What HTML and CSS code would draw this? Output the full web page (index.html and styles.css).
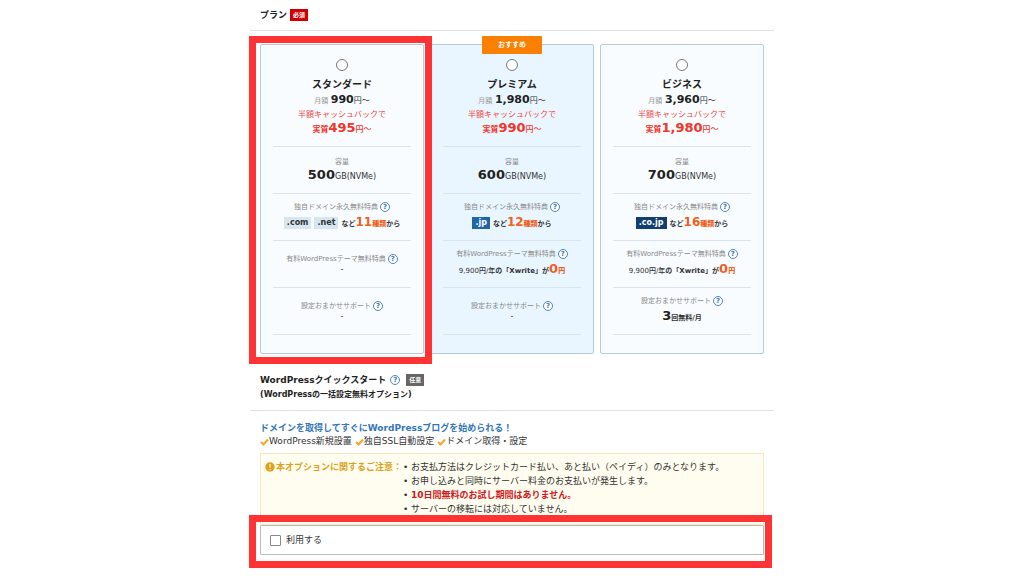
FILE: index.html
```html
<!DOCTYPE html>
<html lang="ja">
<head>
<meta charset="utf-8">
<meta name="viewport" content="width=device-width, initial-scale=1">
<title>プラン</title>
<link rel="stylesheet" href="styles.css">
</head>
<body>
<main class="page">
  <section>
    <header class="section-head">
      <h2 class="title">プラン</h2><span class="badge badge-required">必須</span>
    </header>
    <div class="plans">
      <div class="plan highlighted">
        <div class="card">
          <div class="intro">
            <input class="radio" type="radio" name="plan" id="standard">
            <label class="name" for="standard">スタンダード</label>
            <p class="price"><span class="muted">月額</span> <b>990</b>円〜</p>
            <p class="cashback">半額キャッシュバックで</p>
            <p class="actual"><strong>実質</strong><b>495</b>円〜</p>
          </div>
          <div class="row"><p class="label">容量</p><p class="value"><b>500</b>GB(NVMe)</p></div>
          <div class="row"><p class="label">独自ドメイン永久無料特典<button class="help" type="button">?</button></p><p class="offer"><span class="tag">.com</span><span class="tag">.net</span><span>など<b class="big">11</b><b class="orange">種類</b>から</span></p></div>
          <div class="row"><p class="label">有料WordPressテーマ無料特典<button class="help" type="button">?</button></p><p class="none">-</p></div>
          <div class="row"><p class="label">設定おまかせサポート<button class="help" type="button">?</button></p><p class="none">-</p></div>
        </div>
      </div>
      <div class="plan">
        <span class="ribbon">おすすめ</span>
        <div class="card premium">
          <div class="intro">
            <input class="radio" type="radio" name="plan" id="premium">
            <label class="name" for="premium">プレミアム</label>
            <p class="price"><span class="muted">月額</span> <b>1,980</b>円〜</p>
            <p class="cashback">半額キャッシュバックで</p>
            <p class="actual"><strong>実質</strong><b>990</b>円〜</p>
          </div>
          <div class="row"><p class="label">容量</p><p class="value"><b>600</b>GB(NVMe)</p></div>
          <div class="row"><p class="label">独自ドメイン永久無料特典<button class="help" type="button">?</button></p><p class="offer"><span class="tag tag-jp">.jp</span><span>など<b class="big">12</b><b class="orange">種類</b>から</span></p></div>
          <div class="row"><p class="label">有料WordPressテーマ無料特典<button class="help" type="button">?</button></p><p class="theme"><span class="medium">9,900円/年</span>の「Xwrite」が<b class="zero">0</b><b class="orange">円</b></p></div>
          <div class="row"><p class="label">設定おまかせサポート<button class="help" type="button">?</button></p><p class="none">-</p></div>
        </div>
      </div>
      <div class="plan">
        <div class="card">
          <div class="intro">
            <input class="radio" type="radio" name="plan" id="business">
            <label class="name" for="business">ビジネス</label>
            <p class="price"><span class="muted">月額</span> <b>3,960</b>円〜</p>
            <p class="cashback">半額キャッシュバックで</p>
            <p class="actual"><strong>実質</strong><b>1,980</b>円〜</p>
          </div>
          <div class="row"><p class="label">容量</p><p class="value"><b>700</b>GB(NVMe)</p></div>
          <div class="row"><p class="label">独自ドメイン永久無料特典<button class="help" type="button">?</button></p><p class="offer"><span class="tag tag-cojp">.co.jp</span><span>など<b class="big">16</b><b class="orange">種類</b>から</span></p></div>
          <div class="row"><p class="label">有料WordPressテーマ無料特典<button class="help" type="button">?</button></p><p class="theme"><span class="medium">9,900円/年</span>の「Xwrite」が<b class="zero">0</b><b class="orange">円</b></p></div>
          <div class="row"><p class="label">設定おまかせサポート<button class="help" type="button">?</button></p><p class="support"><b>3</b>回無料/月</p></div>
        </div>
      </div>
    </div>
  </section>

  <section>
    <header class="section-head quick-head">
      <div class="title-line"><h2 class="title">WordPressクイックスタート</h2><button class="help" type="button">?</button><span class="badge badge-optional">任意</span></div>
      <p class="subtitle">(WordPressの一括設定無料オプション)</p>
    </header>
    <div class="quick">
      <p class="lead">ドメインを取得してすぐにWordPressブログを始められる！</p>
      <ul class="features">
        <li><svg class="check" viewBox="0 0 9 8"><path d="M1 4l2.5 2.5L8 1.5"/></svg>WordPress新規設置</li>
        <li><svg class="check" viewBox="0 0 9 8"><path d="M1 4l2.5 2.5L8 1.5"/></svg>独自SSL自動設定</li>
        <li><svg class="check" viewBox="0 0 9 8"><path d="M1 4l2.5 2.5L8 1.5"/></svg>ドメイン取得・設定</li>
      </ul>
      <div class="notice">
        <p class="notice-title"><svg class="alert" viewBox="0 0 10 10"><circle cx="5" cy="5" r="4.7"/><path d="M5 2v3.6M5 7v1.2"/></svg>本オプションに関するご注意：</p>
        <ul class="notice-list">
          <li>お支払方法はクレジットカード払い、あと払い（ペイディ）のみとなります。</li>
          <li>お申し込みと同時にサーバー料金のお支払いが発生します。</li>
          <li class="danger">10日間無料のお試し期間はありません。</li>
          <li>サーバーの移転には対応していません。</li>
        </ul>
      </div>
      <div class="use highlighted">
        <label class="use-box"><input class="checkbox" type="checkbox">利用する</label>
      </div>
    </div>
  </section>
</main>
</body>
</html>
```

FILE: styles.css
```css
* { box-sizing: border-box; }
body {
  margin: 0;
  background: #fff;
  color: #333;
  font-family: "DejaVu Sans", "Noto Sans CJK JP", sans-serif;
  font-size: 9px;
  line-height: 14px;
}
h2, p, ul { margin: 0; padding: 0; }
ul { list-style: none; }
button, input { margin: 0; padding: 0; font-family: inherit; }

.page { max-width: 524px; margin: 0 auto; padding-bottom: 20px; }
.section-head {
  display: flex;
  align-items: center;
  gap: 3px;
  padding: 8px 10px;
  border-bottom: 1px solid #e2e2e2;
}
.title { font-size: 9px; line-height: 14px; color: #222; }
.badge {
  padding: 0 3px;
  font-size: 6px;
  line-height: 12px;
  font-weight: bold;
  color: #fff;
}
.badge-required { background: #d00000; }
.badge-optional { background: #666; }

.plans {
  display: grid;
  grid-template-columns: repeat(3, 1fr);
  gap: 6px;
  padding: 13px 10px 0;
}
.plan { position: relative; }
.card {
  height: 100%;
  padding: 14px 12px 18px;
  background: #f8fcff;
  border: 1px solid #b8cad6;
  border-radius: 2px;
  text-align: center;
}
.premium { background: #eaf6ff; }
.ribbon {
  position: absolute;
  top: -8px;
  left: 50%;
  width: 60px;
  margin-left: -30px;
  background: #f98000;
  border-radius: 1px;
  color: #fff;
  font-size: 7px;
  font-weight: bold;
  line-height: 18px;
  text-align: center;
}
.highlighted { position: relative; }
.highlighted::after {
  content: "";
  position: absolute;
  z-index: 2;
  inset: -8px -8px -10px -11px;
  border: 7px solid #ff3333;
  pointer-events: none;
}

.intro {
  display: flex;
  flex-direction: column;
  align-items: center;
  padding-bottom: 9px;
  border-bottom: 1px solid #dbe4ea;
}
.radio {
  appearance: none;
  width: 12px;
  height: 12px;
  border: 1px solid #777;
  border-radius: 50%;
  background: #fff;
}
.name { padding-top: 7px; font-size: 10px; line-height: 14px; font-weight: bold; color: #222; }
.price { font-size: 8px; line-height: 16px; }
.price b { font-size: 11px; color: #222; }
.muted { font-size: 7px; color: #999; }
.cashback { font-size: 8px; line-height: 12px; color: #f0453a; }
.actual { font-size: 8px; line-height: 14px; color: #f0352a; font-weight: 500; }
.actual b { font-size: 13px; }

.row {
  display: flex;
  flex-direction: column;
  align-items: center;
  justify-content: center;
  height: 47px;
  border-bottom: 1px solid #dbe4ea;
  white-space: nowrap;
}
.label {
  display: flex;
  align-items: center;
  gap: 2px;
  font-size: 7px;
  line-height: 12px;
  color: #888;
}
.help {
  width: 10px;
  height: 10px;
  border: 1px solid #4f86b8;
  border-radius: 50%;
  background: #fff;
  color: #3b78b0;
  font-size: 7px;
  font-weight: bold;
  line-height: 8px;
  text-align: center;
}
.value { font-size: 8px; line-height: 14px; }
.value b, .support b { font-size: 13px; color: #222; }
.offer {
  display: flex;
  align-items: center;
  gap: 3px;
  font-size: 7px;
  line-height: 18px;
  font-weight: bold;
}
.tag { padding: 0 3px; background: #d7e6f1; font-size: 8px; line-height: 12px; }
.tag-jp { background: #1f66a6; color: #fff; }
.tag-cojp { background: #123f70; color: #fff; }
.orange, .big, .zero { color: #f0601c; }
.big { font-size: 12px; }
.zero { font-size: 13px; }
.none { font-size: 8px; line-height: 10px; }
.theme, .support { font-size: 7px; line-height: 18px; font-weight: bold; }
.medium { font-weight: 500; }

.quick-head { display: block; padding: 19px 10px 8px; }
.title-line { display: flex; align-items: center; gap: 4px; }
.title-line .badge { margin-left: 2px; }
.subtitle { margin-top: 1px; font-size: 8px; line-height: 14px; font-weight: bold; color: #222; }
.quick { padding: 10px 10px 0; }
.lead { font-weight: bold; color: #3476b8; }
.features { display: flex; flex-wrap: wrap; column-gap: 3px; line-height: 13px; }
.features li { display: flex; align-items: center; }
.check { width: 9px; height: 8px; fill: none; stroke: #f5a623; stroke-width: 2; }
.notice {
  display: flex;
  gap: 9px;
  margin-top: 5px;
  padding: 6px 4px 8px;
  background: #fffdf0;
  border: 1px solid #f3e8c0;
}
.notice-title { display: flex; align-items: center; align-self: flex-start; gap: 1px; flex: none; color: #dda21a; font-weight: bold; }
.alert { width: 10px; height: 10px; fill: #dda21a; stroke: #fff; stroke-width: 1; }
.alert circle { stroke: none; }
.notice-list li::before {
  content: "•";
  display: inline-block;
  width: 8px;
  margin-left: -8px;
  color: #333;
  font-weight: normal;
}
.danger { font-weight: bold; color: #cf1820; }
.use-box {
  display: flex;
  align-items: center;
  gap: 5px;
  padding: 7px 9px;
  background: #fff;
  border: 1px solid #bbb;
  border-radius: 1px;
}
.use.highlighted::after { inset: -10px -8px -13px -11px; }
.checkbox {
  appearance: none;
  width: 11px;
  height: 11px;
  border: 1px solid #888;
  border-radius: 1px;
  background: #fff;
}
```
